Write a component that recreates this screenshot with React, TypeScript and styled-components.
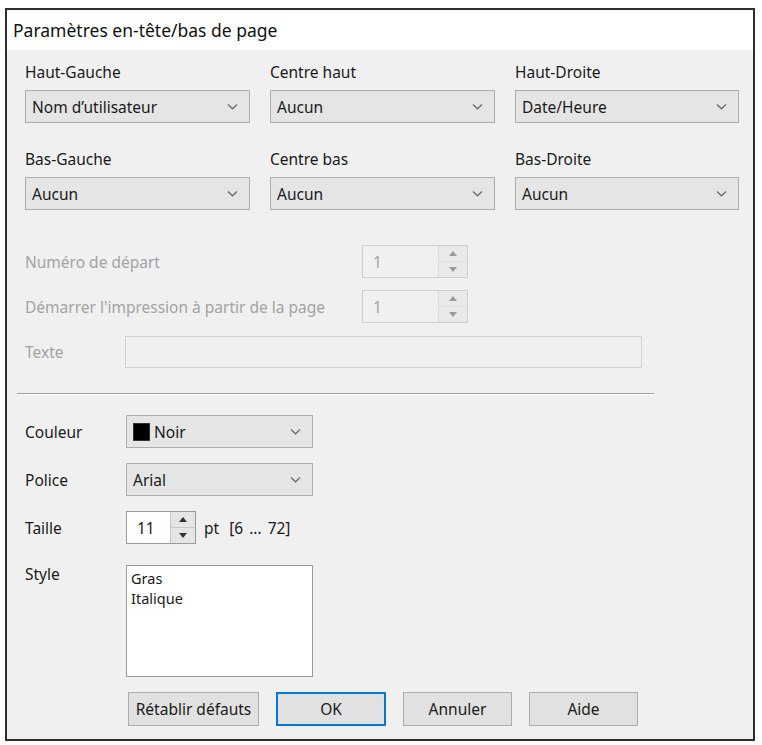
import React from "react";
import styled, { createGlobalStyle } from "styled-components";

const GlobalStyle = createGlobalStyle`
	html, body {
		margin: 0;
		padding: 0;
		background: #ffffff;
	}
	body {
		font-family: "Noto Sans", "Open Sans", "DejaVu Sans", sans-serif;
		font-size: 15.5px;
		color: #1a1a1a;
	}
`;

const Frame = styled.div`
	box-sizing: border-box;
	width: 750px;
	height: 733px;
	margin: 8px 0 0 5px;
	border: 2px solid #2e2e2e;
	background: #f0f0f0;
	display: flex;
	flex-direction: column;
`;

const TitleBar = styled.div`
	height: 40px;
	flex-shrink: 0;
	background: #ffffff;
	display: flex;
	align-items: center;
	padding-left: 6px;
	font-size: 17.5px;
	color: #111;
`;

const Body = styled.div`
	padding: 13px 0 0 18px;
	display: flex;
	flex-direction: column;
`;

const TopGrid = styled.div`
	display: grid;
	grid-template-columns: 225px 225px 224px;
	column-gap: 20px;
	row-gap: 27px;
`;

const Field = styled.div`
	display: flex;
	flex-direction: column;
	gap: 9px;
`;

const Label = styled.span<{ $disabled?: boolean; $width?: number }>`
	display: inline-block;
	line-height: 18px;
	height: 18px;
	white-space: nowrap;
	color: ${(p) => (p.$disabled ? "#a3a3a3" : "#1a1a1a")};
	${(p) => (p.$width ? `width: ${p.$width}px; flex-shrink: 0;` : "")}
`;

const SelectBox = styled.div<{ $width?: number }>`
	box-sizing: border-box;
	width: ${(p) => (p.$width ? `${p.$width}px` : "100%")};
	height: 33px;
	border: 1px solid #adadad;
	background: #e5e5e5;
	display: flex;
	align-items: center;
	justify-content: space-between;
	padding: 0 11px 0 6px;
	white-space: nowrap;
`;

const SelectValue = styled.span`
	display: flex;
	align-items: center;
	gap: 4px;
`;

const Swatch = styled.span`
	display: inline-block;
	width: 17px;
	height: 18px;
	background: #000;
	border: 1px solid #333;
	box-sizing: border-box;
`;

const Chevron = () => (
	<svg width="11" height="7" viewBox="0 0 11 7">
		<polyline points="1,1.5 5.5,5.8 10,1.5" fill="none" stroke="#6a6a6a" strokeWidth="1.2" />
	</svg>
);

const Select: React.FC<{ value: string; width?: number; swatch?: boolean }> = ({ value, width, swatch }) => (
	<SelectBox $width={width}>
		<SelectValue>
			{swatch && <Swatch />}
			{value}
		</SelectValue>
		<Chevron />
	</SelectBox>
);

const DisabledBlock = styled.div`
	margin-top: 35px;
	display: flex;
	flex-direction: column;
	gap: 12px;
`;

const Row = styled.div<{ $top?: number }>`
	display: flex;
	align-items: center;
	${(p) => (p.$top ? `margin-top: ${p.$top}px;` : "")}
`;

const SpinBox = styled.div<{ $width: number; $disabled?: boolean }>`
	box-sizing: border-box;
	width: ${(p) => p.$width}px;
	height: 33px;
	display: flex;
	border: 1px solid ${(p) => (p.$disabled ? "#cfcfcf" : "#9a9a9a")};
	background: ${(p) => (p.$disabled ? "#f0f0f0" : "#ffffff")};
`;

const SpinValue = styled.span<{ $disabled?: boolean }>`
	flex: 1;
	display: flex;
	align-items: center;
	padding-left: 10px;
	color: ${(p) => (p.$disabled ? "#a3a3a3" : "#1a1a1a")};
`;

const SpinButtons = styled.div<{ $width: number; $disabled?: boolean }>`
	width: ${(p) => p.$width}px;
	display: flex;
	flex-direction: column;
	border-left: 1px solid ${(p) => (p.$disabled ? "#dadada" : "#c4c4c4")};
	background: ${(p) => (p.$disabled ? "#e9e9e9" : "#e5e5e5")};
`;

const SpinHalf = styled.div<{ $disabled?: boolean; $first?: boolean }>`
	flex: 1;
	display: flex;
	align-items: center;
	justify-content: center;
	${(p) => (p.$first ? `border-bottom: 1px solid ${p.$disabled ? "#e0e0e0" : "#c8c8c8"};` : "")}
`;

const Triangle = ({ up, color }: { up?: boolean; color: string }) => (
	<svg width="8" height="5" viewBox="0 0 8 5">
		<polygon points={up ? "0,5 4,0 8,5" : "0,0 8,0 4,5"} fill={color} />
	</svg>
);

const Spinner: React.FC<{ value: string; width: number; buttons: number; disabled?: boolean }> = ({
	value,
	width,
	buttons,
	disabled,
}) => {
	const color = disabled ? "#9a9a9a" : "#333";
	return (
		<SpinBox $width={width} $disabled={disabled}>
			<SpinValue $disabled={disabled}>{value}</SpinValue>
			<SpinButtons $width={buttons} $disabled={disabled}>
				<SpinHalf $first $disabled={disabled}>
					<Triangle up color={color} />
				</SpinHalf>
				<SpinHalf $disabled={disabled}>
					<Triangle color={color} />
				</SpinHalf>
			</SpinButtons>
		</SpinBox>
	);
};

const TextField = styled.div`
	box-sizing: border-box;
	width: 517px;
	height: 32px;
	border: 1px solid #d2d2d2;
	background: #f0f0f0;
`;

const Separator = styled.div`
	margin: 25px 0 0 -8px;
	width: 637px;
	border-top: 1px solid #a0a0a0;
	border-bottom: 1px solid #ffffff;
`;

const FormBlock = styled.div`
	margin-top: 20px;
	display: flex;
	flex-direction: column;
	gap: 15px;
`;

const Unit = styled.span`
	margin-left: 8px;
	white-space: nowrap;
`;

const Bounds = styled.span`
	margin-left: 10px;
	white-space: nowrap;
	word-spacing: 2px;
`;

const StyleRow = styled.div`
	margin-top: 21px;
	display: flex;
	align-items: flex-start;
`;

const ListBox = styled.div`
	box-sizing: border-box;
	width: 187px;
	height: 112px;
	border: 1px solid #9a9a9a;
	background: #ffffff;
	padding: 2px 4px;
	display: flex;
	flex-direction: column;
	font-size: 14.5px;
	line-height: 20px;
`;

const ButtonBar = styled.div`
	margin: 15px 0 0 103px;
	display: flex;
	gap: 17px;
`;

const Button = styled.div<{ $width: number; $default?: boolean }>`
	box-sizing: border-box;
	width: ${(p) => p.$width}px;
	height: 34px;
	display: flex;
	align-items: center;
	justify-content: center;
	background: #e1e1e1;
	border: ${(p) => (p.$default ? "2px solid #0078d7" : "1px solid #adadad")};
	white-space: nowrap;
`;

const positions = [
	{ label: "Haut-Gauche", value: "Nom d\u2019utilisateur" },
	{ label: "Centre haut", value: "Aucun" },
	{ label: "Haut-Droite", value: "Date/Heure" },
	{ label: "Bas-Gauche", value: "Aucun" },
	{ label: "Centre bas", value: "Aucun" },
	{ label: "Bas-Droite", value: "Aucun" },
];

const App: React.FC = () => {
	return (
		<>
			<GlobalStyle />
			<Frame>
				<TitleBar>Paramètres en-tête/bas de page</TitleBar>
				<Body>
					<TopGrid>
						{positions.map((p) => (
							<Field key={p.label}>
								<Label>{p.label}</Label>
								<Select value={p.value} />
							</Field>
						))}
					</TopGrid>

					<DisabledBlock>
						<Row>
							<Label $disabled $width={337}>Numéro de départ</Label>
							<Spinner value="1" width={106} buttons={28} disabled />
						</Row>
						<Row>
							<Label $disabled $width={337}>Démarrer l'impression à partir de la page</Label>
							<Spinner value="1" width={106} buttons={28} disabled />
						</Row>
						<Row $top={1}>
							<Label $disabled $width={100}>Texte</Label>
							<TextField />
						</Row>
					</DisabledBlock>

					<Separator />

					<FormBlock>
						<Row>
							<Label $width={101}>Couleur</Label>
							<Select value="Noir" width={187} swatch />
						</Row>
						<Row>
							<Label $width={101}>Police</Label>
							<Select value="Arial" width={187} />
						</Row>
						<Row>
							<Label $width={101}>Taille</Label>
							<Spinner value="11" width={70} buttons={24} />
							<Unit>pt</Unit>
							<Bounds>[6 ... 72]</Bounds>
						</Row>
					</FormBlock>

					<StyleRow>
						<Label $width={101}>Style</Label>
						<ListBox>
							<span>Gras</span>
							<span>Italique</span>
						</ListBox>
					</StyleRow>

					<ButtonBar>
						<Button $width={131}>Rétablir défauts</Button>
						<Button $width={110} $default>OK</Button>
						<Button $width={109}>Annuler</Button>
						<Button $width={109}>Aide</Button>
					</ButtonBar>
				</Body>
			</Frame>
		</>
	);
};

export default App;
